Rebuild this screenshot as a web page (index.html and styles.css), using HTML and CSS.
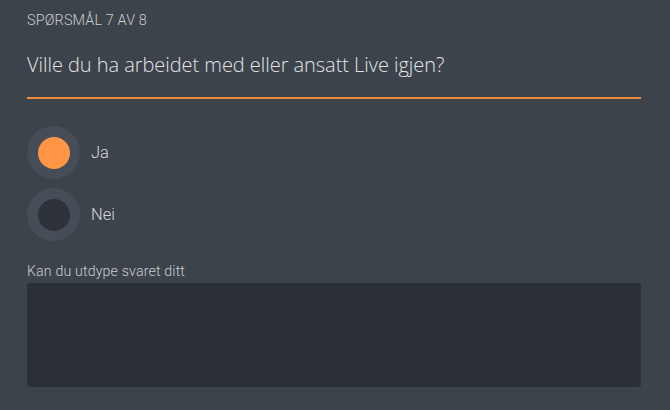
FILE: index.html
```html
<!DOCTYPE html>
<html>
<head>
<meta charset="utf-8">
<link rel="stylesheet" href="styles.css">
</head>
<body>
<main class="page">
  <div class="counter">SPØRSMÅL 7 AV 8</div>
  <h1 class="question">Ville du ha arbeidet med eller ansatt Live igjen?</h1>
  <div class="options">
    <label class="option">
      <span class="radio"><span class="dot selected"></span></span>
      <span class="opt-label">Ja</span>
    </label>
    <label class="option">
      <span class="radio"><span class="dot"></span></span>
      <span class="opt-label">Nei</span>
    </label>
  </div>
  <div class="field">
    <div class="field-label">Kan du utdype svaret ditt</div>
    <div class="textarea"></div>
  </div>
</main>
</body>
</html>
```

FILE: styles.css
```css
html, body {
  margin: 0;
  padding: 0;
  background: #3d434b;
  width: 670px;
  height: 410px;
  overflow: hidden;
}
.page {
  padding: 12px 29px 0 27px;
  font-family: Roboto, "Liberation Sans", sans-serif;
  font-weight: 300;
  color: #d5d8dc;
}
.counter {
  font-size: 14.4px;
  line-height: 18px;
  letter-spacing: 0.15px;
  color: #c9ccd0;
}
.question {
  margin: 22px 0 0 0;
  font-family: "Open Sans", "Noto Sans", sans-serif;
  font-weight: 300;
  font-size: 20px;
  line-height: 26px;
  color: #e2e4e7;
  padding-bottom: 19px;
  border-bottom: 2px solid #f28a3c;
  letter-spacing: -0.05px;
}
.options {
  margin-top: 27px;
  display: flex;
  flex-direction: column;
  gap: 9px;
}
.option {
  display: flex;
  align-items: center;
  gap: 11px;
}
.radio {
  width: 53px;
  height: 53px;
  border-radius: 50%;
  background: #474d57;
  display: flex;
  align-items: center;
  justify-content: center;
}
.dot {
  width: 32px;
  height: 32px;
  border-radius: 50%;
  background: #2e323a;
}
.dot.selected {
  background: #ff9545;
}
.opt-label {
  font-size: 16.5px;
  color: #d5d8dc;
}
.field {
  margin-top: 21px;
}
.field-label {
  font-size: 14.2px;
  line-height: 18px;
  letter-spacing: 0.15px;
  color: #c9ccd0;
  margin-bottom: 3px;
}
.textarea {
  height: 104px;
  background: #2b2f37;
  border-radius: 3px;
}
```
